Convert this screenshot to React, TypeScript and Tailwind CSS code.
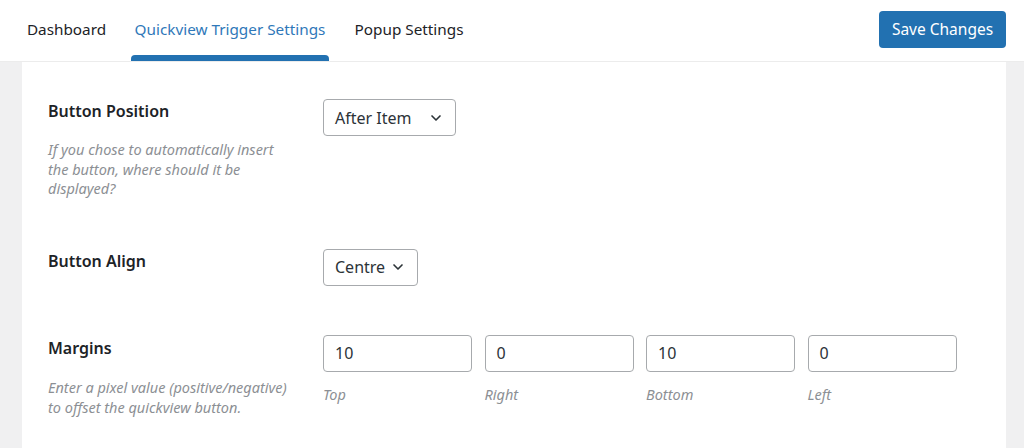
import { ChevronDown } from "lucide-react";

const font = { fontFamily: '"Noto Sans", "Open Sans", sans-serif' };

function Select({ value, width }: { value: string; width: string }) {
  return (
    <div
      className={`${width} h-[37px] flex items-center justify-between pl-[11px] pr-[11px] border border-[#a7aaad] rounded-[4px] bg-white text-[16px] text-[#2c3338]`}
    >
      <span>{value}</span>
      <ChevronDown className="w-[16px] h-[16px] text-[#2c3338]" strokeWidth={2.5} />
    </div>
  );
}

function MarginInput({ value, label }: { value: string; label: string }) {
  return (
    <div className="w-[149px] flex flex-col">
      <div className="h-[37px] flex items-center px-[11px] border border-[#a7aaad] rounded-[4px] bg-white text-[16px] text-[#2c3338]">
        {value}
      </div>
      <span className="mt-[12px] text-[14.5px] italic text-[#8c8f94]">{label}</span>
    </div>
  );
}

export default function App() {
  return (
    <div className="w-full h-[448px] overflow-hidden bg-white flex flex-col" style={font}>
      {/* Top bar with tabs */}
      <div className="h-[62px] flex items-stretch justify-between border-b border-[#ececec] bg-white shrink-0">
        <nav className="flex items-stretch pl-[23px] gap-[21px] text-[15.3px] whitespace-nowrap">
          <a className="w-[87px] flex items-center justify-center pb-[3px] text-[#1d2327]">Dashboard</a>
          <a className="w-[198px] relative flex items-center justify-center pb-[3px] text-[#2f78b9]">
            Quickview Trigger Settings
            <span className="absolute left-0 right-0 bottom-0 h-[6px] bg-[#2271b1] rounded-t-[4px]" />
          </a>
          <a className="w-[118px] flex items-center justify-center pb-[3px] text-[#1d2327]">Popup Settings</a>
        </nav>
        <div className="flex items-start pt-[11px] pr-[18px]">
          <button className="w-[127px] h-[37px] rounded-[4px] bg-[#2271b1] text-white text-[15.5px] flex items-center justify-center whitespace-nowrap">
            Save Changes
          </button>
        </div>
      </div>

      {/* Body */}
      <div className="flex-1 bg-[#f0f0f1] pl-[22px] pr-[18px]">
        <div className="h-full bg-white pl-[26px] pt-[37px] text-[#1d2327]">
          {/* Button Position */}
          <div className="flex">
            <div className="w-[275px]">
              <h3 className="text-[16px] leading-[24px] font-semibold">Button Position</h3>
              <p className="mt-[17px] w-[235px] text-[14.5px] leading-[19.5px] italic text-[#8c8f94]">
                If you chose to automatically insert the button, where should it be displayed?
              </p>
            </div>
            <Select value="After Item" width="w-[133px]" />
          </div>

          {/* Button Align */}
          <div className="flex mt-[50px]">
            <div className="w-[275px]">
              <h3 className="text-[16px] leading-[24px] font-semibold">Button Align</h3>
            </div>
            <Select value="Centre" width="w-[95px]" />
          </div>

          {/* Margins */}
          <div className="flex mt-[49px]">
            <div className="w-[275px]">
              <h3 className="text-[16px] leading-[24px] font-semibold mt-[1px]">Margins</h3>
              <p className="mt-[17px] w-[250px] text-[14.5px] leading-[20px] italic text-[#8c8f94]">
                Enter a pixel value (positive/negative)
                <br />
                to offset the quickview button.
              </p>
            </div>
            <div className="flex gap-[12.5px]">
              <MarginInput value="10" label="Top" />
              <MarginInput value="0" label="Right" />
              <MarginInput value="10" label="Bottom" />
              <MarginInput value="0" label="Left" />
            </div>
          </div>
        </div>
      </div>
    </div>
  );
}
